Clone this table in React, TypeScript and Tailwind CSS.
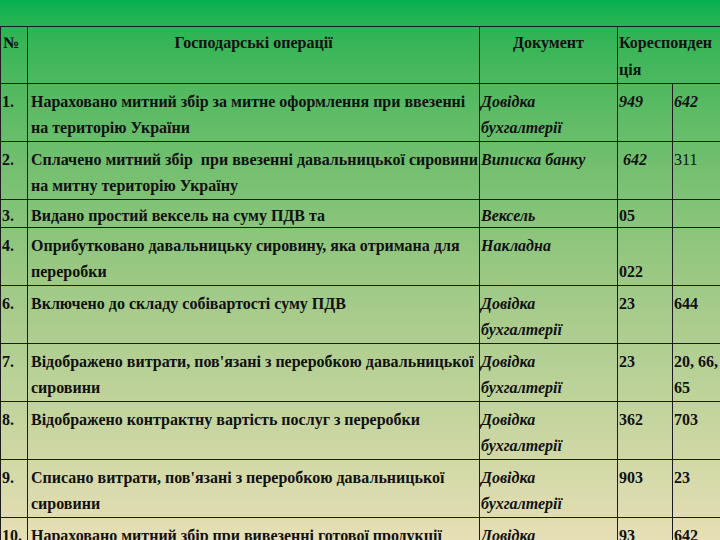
import React from "react";

type Row = {
  n: string;
  op: string;
  doc: string[];
  dt: string;
  kt: string;
  dtItalic?: boolean;
  ktItalic?: boolean;
  ktNormal?: boolean;
  dtBottom?: boolean;
  single?: boolean;
};

const rows: Row[] = [
  {
    n: "1.",
    op: "Нараховано митний збір за митне оформлення при ввезенні на територію України",
    doc: ["Довідка", "бухгалтерії"],
    dt: "949",
    kt: "642",
    dtItalic: true,
    ktItalic: true,
  },
  {
    n: "2.",
    op: "Сплачено митний збір\u00a0 при ввезенні давальницької сировини на митну територію Україну",
    doc: ["Виписка банку"],
    dt: "\u00a0642",
    kt: "311",
    dtItalic: true,
    ktNormal: true,
  },
  {
    n: "3.",
    op: "Видано простий вексель на суму ПДВ та",
    doc: ["Вексель"],
    dt: "05",
    kt: "",
    single: true,
  },
  {
    n: "4.",
    op: "Оприбутковано давальницьку сировину, яка отримана для переробки",
    doc: ["Накладна"],
    dt: "022",
    kt: "",
    dtBottom: true,
  },
  {
    n: "6.",
    op: "Включено до складу собівартості суму ПДВ",
    doc: ["Довідка", "бухгалтерії"],
    dt: "23",
    kt: "644",
  },
  {
    n: "7.",
    op: "Відображено витрати, пов'язані з переробкою давальницької сировини",
    doc: ["Довідка", "бухгалтерії"],
    dt: "23",
    kt: "20, 66, 65",
  },
  {
    n: "8.",
    op: "Відображено контрактну вартість послуг з переробки",
    doc: ["Довідка", "бухгалтерії"],
    dt: "362",
    kt: "703",
  },
  {
    n: "9.",
    op: "Списано витрати, пов'язані з переробкою давальницької сировини",
    doc: ["Довідка", "бухгалтерії"],
    dt: "903",
    kt: "23",
  },
  {
    n: "10.",
    op: "Нараховано митний збір при вивезенні готової продукції",
    doc: ["Довідка", "бухгалтерії"],
    dt: "93",
    kt: "642",
  },
];

const border = "border border-[#1c1c1c]";

export default function App() {
  return (
    <div
      className="h-[540px] w-[720px] overflow-hidden bg-gradient-to-b from-[#00b14f] via-[#a2ca88] via-55% to-[#e7dfb5] text-[#111]"
      style={{ fontFamily: '"Liberation Serif", "DejaVu Serif", serif' }}
    >
      <div className="h-[26px]" />
      <table className="w-[728px] table-fixed border-collapse text-[16px] font-bold">
        <colgroup>
          <col className="w-[27px]" />
          <col className="w-[452px]" />
          <col className="w-[138px]" />
          <col className="w-[55px]" />
          <col className="w-[56px]" />
        </colgroup>
        <thead>
          <tr className="leading-[26.5px]">
            <th className={`${border} align-top pl-[2px] pt-[3px] text-left font-bold`}>№</th>
            <th className={`${border} align-top pt-[3px] text-center font-bold`}>
              Господарські операції
            </th>
            <th className={`${border} align-top pt-[3px] text-center font-bold`}>Документ</th>
            <th colSpan={2} className={`${border} align-top pl-[1px] pt-[3px] text-left font-bold`}>
              Кореспонден
              <br />
              ція
            </th>
          </tr>
        </thead>
        <tbody>
          {rows.map((r) => {
            const c = r.single
              ? `${border} pt-[5px] leading-[22px]`
              : `${border} pt-[5px] leading-[26px]`;
            return (
              <tr key={r.n}>
                <td className={`${c} align-top pl-[1px]`}>{r.n}</td>
                <td className={`${c} align-top pl-[3px]`}>{r.op}</td>
                <td className={`${c} align-top pl-[1px] italic`}>
                  {r.doc.map((d, i) => (
                    <div key={i}>{d}</div>
                  ))}
                </td>
                <td
                  className={`${c} pl-[1px] ${r.dtItalic ? "italic" : ""} ${
                    r.dtBottom ? "align-bottom" : "align-top"
                  }`}
                >
                  {r.dt}
                </td>
                <td
                  className={`${c} align-top pl-[1px] ${r.ktItalic ? "italic" : ""} ${
                    r.ktNormal ? "font-normal" : ""
                  }`}
                >
                  {r.kt}
                </td>
              </tr>
            );
          })}
        </tbody>
      </table>
    </div>
  );
}
